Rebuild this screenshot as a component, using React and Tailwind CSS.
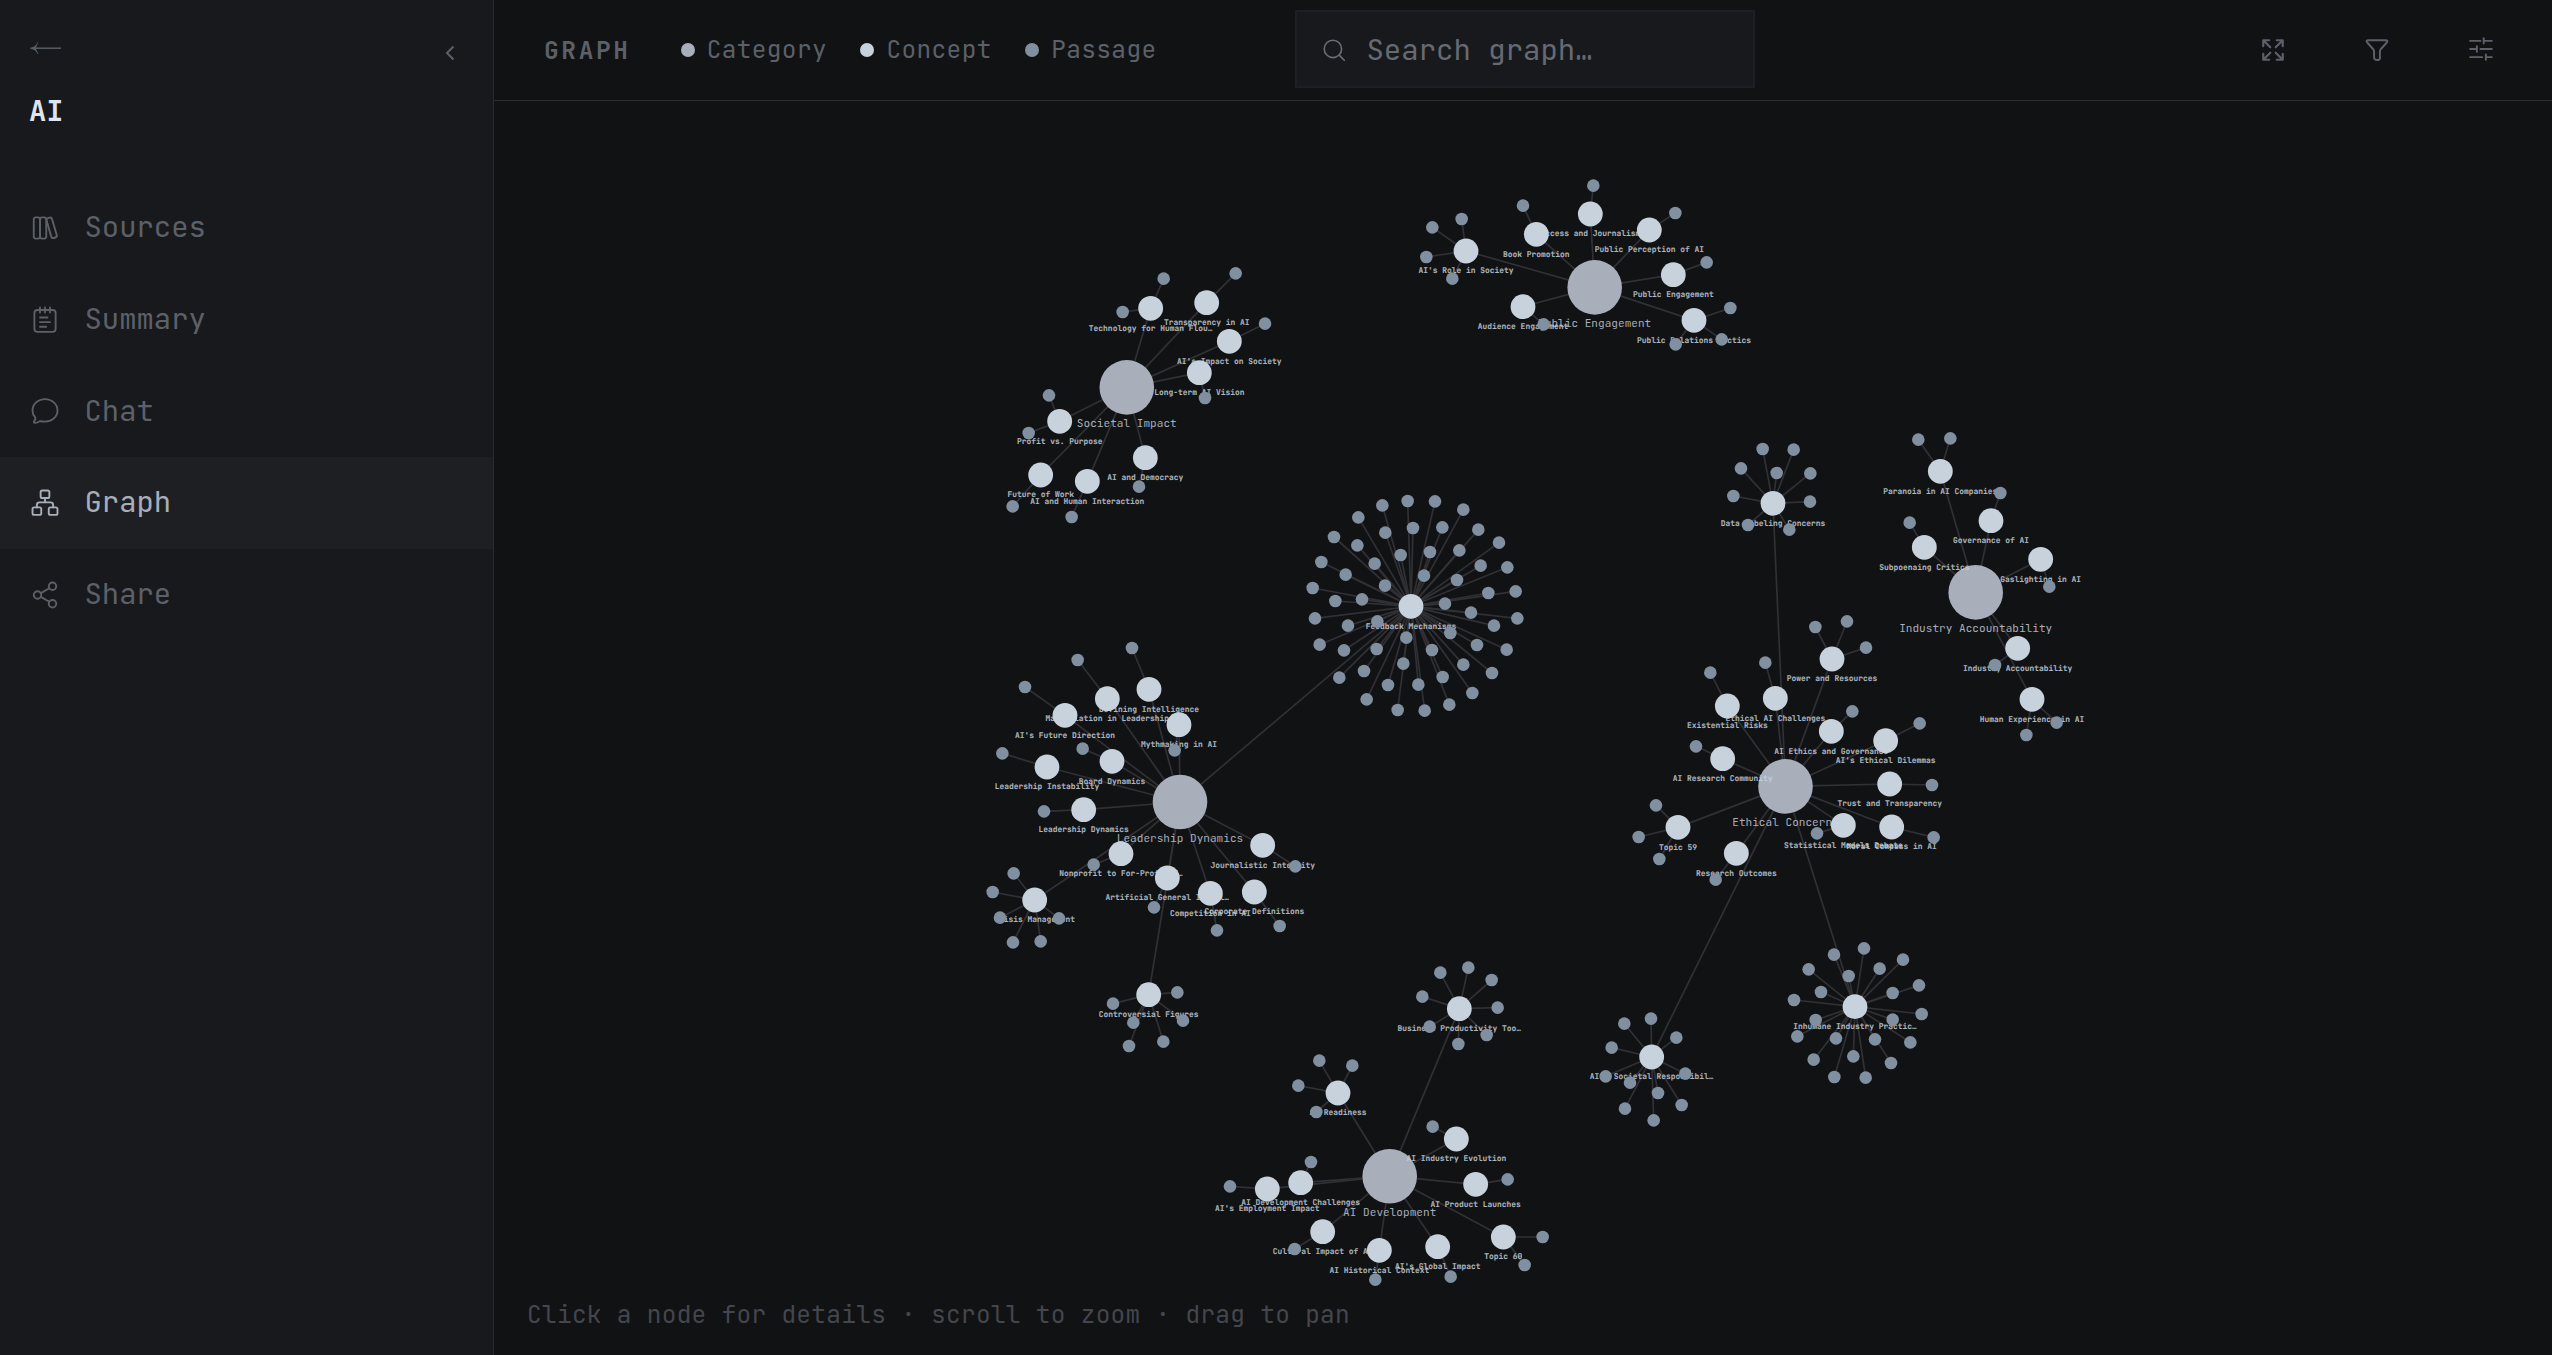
import React, { useState } from 'react';

const NAV_ITEMS = ['Sources', 'Summary', 'Chat', 'Graph', 'Share'];

const LEGEND = [
  { label: 'Category', dot: 'bg-[#a8aeba]' },
  { label: 'Concept', dot: 'bg-[#c8d2dc]' },
  { label: 'Passage', dot: 'bg-[#8090a0]' },
];

const ICON_PATHS = {
  Sources: (
    <>
      <path d="M3 5.2c0-1.1.4-1.7 1.7-1.7H6.3c1.3 0 1.7.6 1.7 1.7v13.6c0 1.1-.4 1.7-1.7 1.7H4.7c-1.3 0-1.7-.6-1.7-1.7z" />
      <path d="M8 5.2c0-1.1.4-1.7 1.7-1.7h1.6c1.3 0 1.7.6 1.7 1.7v13.6c0 1.1-.4 1.7-1.7 1.7H9.7c-1.3 0-1.7-.6-1.7-1.7z" />
      <path d="M13.3 6.1c-.3-1.1 0-1.7 1.1-2l1.2-.4c1.1-.3 1.7.1 2 1.1l3.8 12.8c.3 1.1 0 1.7-1.1 2l-1.3.4c-1.1.3-1.7-.1-2-1.1z" />
    </>
  ),
  Summary: (
    <>
      <rect x="3.5" y="4" width="17" height="17.5" rx="2.5" />
      <path d="M8 2v4M12 2v4M16 2v4M8 10h6M8 13.7h8M8 17.4h5" />
    </>
  ),
  Chat: (
    <path d="M12 20.5c5.5 0 10-4 10-9s-4.5-9-10-9-10 4-10 9c0 2.2.8 4.2 2.3 5.8.2.9-.2 1.9-1 2.7-.5.6-.2 1.5.6 1.5 1.3 0 2.7-.4 3.9-1.4 1.3.3 2.7.4 4.2.4z" />
  ),
  Graph: (
    <>
      <rect x="8.5" y="2" width="7" height="6" rx="1.3" />
      <rect x="2" y="15.5" width="7" height="6" rx="1.3" />
      <rect x="15" y="15.5" width="7" height="6" rx="1.3" />
      <path d="M12 8v3.5M5.5 15.5v-2c0-1.3.6-2 2-2h9c1.4 0 2 .7 2 2v2" />
    </>
  ),
  Share: (
    <>
      <circle cx="18" cy="5" r="3" />
      <circle cx="6" cy="12" r="3" />
      <circle cx="18" cy="19" r="3" />
      <path d="M8.7 10.5l6.7-3.9M8.7 13.5l6.7 3.9" />
    </>
  ),
  Expand: (
    <path d="M3 8.5V3h5.5M3.3 3.3L9.5 9.5M15.5 3H21v5.5M20.7 3.3L14.5 9.5M3 15.5V21h5.5M3.3 20.7l6.2-6.2M15.5 21H21v-5.5M20.7 20.7l-6.2-6.2" />
  ),
  Filter: (
    <path d="M3.8 3h16.4c1.5 0 1.7 1 .9 2-1.6 2-3.7 4-5.6 6.3-.6.7-.8 1.4-.8 2.3v5.7c0 1.2-.9 2-2.5 2s-2.9-1-2.9-2.3v-5.4c0-.9-.2-1.6-.8-2.3C6.6 9 4.5 7 2.9 5c-.8-1-.6-2 .9-2z" />
  ),
  Sliders: (
    <path d="M2 4.5h9.5M14.5 4.5H22M14.5 2v5M2 12h6M11.5 12H22M8.2 9.5v5M2 19.5h11M16.5 19.5H22M16.5 17v5" />
  ),
  Search: (
    <>
      <circle cx="11" cy="11" r="8" />
      <path d="M17 17l4.5 4.5" />
    </>
  ),
};

const Icon = ({ name, className, strokeWidth = 1.5 }) => (
  <svg
    viewBox="0 0 24 24"
    className={className}
    fill="none"
    stroke="currentColor"
    strokeWidth={strokeWidth}
    strokeLinecap="round"
    strokeLinejoin="round"
  >
    {ICON_PATHS[name]}
  </svg>
);

// Graph layout
const CATEGORIES = {
  societal: { label: 'Societal Impact', x: 1126.8, y: 387.4 },
  engagement: { label: 'Public Engagement', x: 1594.7, y: 287.4 },
  leadership: { label: 'Leadership Dynamics', x: 1180, y: 802 },
  ethical: { label: 'Ethical Concerns', x: 1785.5, y: 786.4 },
  industry: { label: 'Industry Accountability', x: 1975.7, y: 592.4 },
  development: { label: 'AI Development', x: 1389.7, y: 1176.2 },
};

// Node positions are relative to the cluster origin, three units to a pixel.
// Each concept is [label, x, y, [passage x, passage y, ...]]
const UNIT = 3;

const CLUSTERS = [
  {
    parent: 'societal',
    origin: [980, 250],
    concepts: [
      ['Technology for Human Flou…', 512, 175, [551, 86, 428, 186]],
      ['Transparency in AI', 680, 158, [767, 70]],
      ["AI's Impact on Society", 748, 274, [855, 221]],
      ['Long-term AI Vision', 658, 368, [675, 444]],
      ['Profit vs. Purpose', 239, 514, [207, 436, 146, 549]],
      ['Future of Work', 182, 675, [98, 769]],
      ['AI and Human Interaction', 322, 694, [275, 801]],
      ['AI and Democracy', 496, 623, [477, 710]],
    ],
  },
  {
    parent: 'engagement',
    origin: [1400, 160],
    concepts: [
      ["AI's Role in Society", 198, 273, [97, 202, 185, 177, 79, 291, 157, 356]],
      ['Access and Journalism', 571, 162, [580, 77]],
      ['Book Promotion', 409, 223, [369, 137]],
      ['Public Perception of AI', 748, 210, [826, 159]],
      ['Public Engagement', 820, 344, [920, 307]],
      ['Public Relations Tactics', 882, 481, [991, 444, 965, 538, 827, 553]],
      ['Audience Engagement', 369, 440, [431, 493]],
    ],
  },
  {
    parent: 'leadership',
    origin: [1290, 480],
    concepts: [
      ['Feedback Mechanisms', 363, 379, [
        353, 63, 435, 64, 277, 76, 520, 89, 205, 112, 369, 144, 457, 142, 565, 149,
        286, 158, 132, 171, 627, 188, 202, 196, 508, 211, 420, 216, 332, 225, 94, 246,
        254, 251, 572, 257, 652, 262, 167, 284, 402, 287, 501, 300, 285, 317, 68, 324,
        677, 334, 595, 339, 216, 358, 136, 363, 465, 371, 543, 398, 75, 415, 682, 415,
        262, 424, 174, 437, 612, 437, 481, 459, 349, 473, 89, 494, 561, 495, 260, 507,
        162, 511, 650, 509, 426, 510, 340, 551, 520, 554, 222, 573, 606, 579, 148, 593,
        458, 591, 294, 615, 385, 614, 547, 639, 230, 658, 478, 674, 323, 690, 404, 692,
      ]],
    ],
  },
  {
    parent: 'leadership',
    origin: [970, 630],
    concepts: [
      ['Defining Intelligence', 537, 178, [486, 54]],
      ['Manipulation in Leadership', 412, 206, [323, 90]],
      ["AI's Future Direction", 285, 256, [165, 171]],
      ['Mythmaking in AI', 627, 284, [614, 361]],
      ['Board Dynamics', 426, 394, [338, 356]],
      ['Leadership Instability', 231, 411, [97, 370]],
      ['Leadership Dynamics', 341, 539, [222, 544]],
      ['Nonprofit to For-Profit T…', 453, 671, [371, 704]],
      ['Artificial General Intell…', 592, 744, [552, 832]],
      ['Competition in AI', 721, 790, [741, 901]],
      ['Corporate Definitions', 853, 786, [929, 888]],
      ['Journalistic Integrity', 878, 646, [976, 709]],
      ['Crisis Management', 194, 810, [131, 730, 68, 786, 90, 863, 267, 865, 129, 937, 212, 934]],
      ['Controversial Figures', 536, 1094, [622, 1087, 429, 1121, 490, 1178, 639, 1172, 477, 1248, 580, 1235]],
    ],
  },
  {
    parent: 'ethical',
    origin: [1610, 610],
    concepts: [
      ['Power and Resources', 666, 147, [616, 51, 711, 34, 768, 113]],
      ['Ethical AI Challenges', 496, 265, [466, 158]],
      ['Existential Risks', 352, 288, [301, 188]],
      ['AI Ethics and Governance', 664, 364, [727, 304]],
      ["AI's Ethical Dilemmas", 827, 392, [929, 340]],
      ['AI Research Community', 338, 446, [258, 409]],
      ['Trust and Transparency', 839, 522, [966, 525]],
      ['Statistical Models Debate', 700, 646, [621, 670]],
      ['Moral Compass in AI', 845, 651, [971, 682]],
      ['Topic 59', 204, 652, [138, 586, 86, 681, 148, 747]],
      ['Research Outcomes', 379, 730, [317, 809]],
    ],
  },
  {
    parent: 'ethical',
    origin: [1700, 420],
    concepts: [
      ['Data Labeling Concerns', 219, 250, [
        188, 87, 281, 89, 123, 145, 230, 159, 331, 160, 100, 228, 330, 245, 144, 315, 268, 329,
      ]],
    ],
  },
  {
    parent: 'ethical',
    origin: [1570, 920],
    concepts: [
      ["AI's Societal Responsibil…", 245, 411, [
        163, 311, 243, 296, 319, 353, 125, 383, 107, 469, 180, 488, 346, 461, 264, 519,
        165, 566, 335, 555, 251, 601,
      ]],
      ['Inhumane Industry Practic…', 855, 260, [
        792, 104, 882, 85, 999, 119, 716, 148, 929, 146, 836, 168, 1047, 196, 753, 216,
        968, 219, 672, 240, 1055, 282, 737, 300, 968, 299, 682, 349, 798, 355, 915, 358,
        1021, 367, 731, 419, 850, 409, 963, 429, 793, 471, 887, 473,
      ]],
    ],
  },
  {
    parent: 'industry',
    origin: [1700, 420],
    concepts: [
      ['Paranoia in AI Companies', 721, 154, [655, 59, 751, 55]],
      ['Governance of AI', 873, 302, [901, 219]],
      ['Subpoenaing Critics', 673, 382, [629, 308]],
      ['Gaslighting in AI', 1022, 418, [1048, 500]],
      ['Industry Accountability', 953, 685, [885, 735]],
      ['Human Experience in AI', 996, 838, [1070, 908, 979, 945]],
    ],
  },
  {
    parent: 'development',
    origin: [1210, 950],
    concepts: [
      ['Business Productivity Too…', 748, 176, [
        691, 68, 775, 53, 845, 90, 637, 140, 863, 173, 659, 230, 830, 255, 745, 282,
      ]],
      ['AI Readiness', 384, 429, [328, 332, 427, 347, 265, 407, 319, 486]],
      ['AI Industry Evolution', 739, 567, [668, 530]],
      ["AI's Employment Impact", 172, 717, [60, 709]],
      ['AI Development Challenges', 272, 698, [303, 636]],
      ['AI Product Launches', 797, 703, [893, 688]],
      ['Cultural Impact of AI', 338, 845, [254, 897]],
      ['AI Historical Context', 508, 901, [496, 989]],
      ["AI's Global Impact", 683, 890, [722, 980]],
      ['Topic 60', 880, 861, [998, 861, 944, 945]],
    ],
  },
];

const buildGraph = () => {
  const concepts = [];
  const passages = [];
  const links = [];

  CLUSTERS.forEach(({ parent, origin, concepts: items }) => {
    items.forEach(([label, x, y, points]) => {
      const concept = { label, x: origin[0] + x / UNIT, y: origin[1] + y / UNIT };
      concepts.push(concept);
      links.push([CATEGORIES[parent], concept]);
      for (let i = 0; i < points.length; i += 2) {
        const passage = { x: origin[0] + points[i] / UNIT, y: origin[1] + points[i + 1] / UNIT };
        passages.push(passage);
        links.push([concept, passage]);
      }
    });
  });

  return { concepts, passages, links };
};

const { concepts, passages, links } = buildGraph();

const GraphCanvas = () => (
  <svg viewBox="494 101 2058 1254" className="block w-full h-full">
    <g stroke="#303035" strokeWidth="1.7">
      {links.map(([a, b], i) => (
        <line key={i} x1={a.x} y1={a.y} x2={b.x} y2={b.y} />
      ))}
    </g>
    <g textAnchor="middle" className="text-[11.1px]">
      {Object.values(CATEGORIES).map((n) => (
        <g key={n.label}>
          <circle cx={n.x} cy={n.y} r="27.3" fill="#a8aeba" />
          <text x={n.x} y={n.y + 39.6} fill="#a8aeba">{n.label}</text>
        </g>
      ))}
    </g>
    <g textAnchor="middle" textRendering="geometricPrecision" className="text-[7.93px] font-bold">
      {concepts.map((n) => (
        <g key={n.label}>
          <circle cx={n.x} cy={n.y} r="12.4" fill="#c8d2dc" />
          <text
            x={n.x}
            y={n.y + 22.4}
            fill="#c8d2dc"
            fillOpacity="0.85"
            stroke="#c8d2dc"
            strokeOpacity="0.5"
            strokeWidth="0.2"
          >
            {n.label}
          </text>
        </g>
      ))}
    </g>
    <g fill="#8090a0">
      {passages.map((n, i) => (
        <circle key={i} cx={n.x} cy={n.y} r="6.3" />
      ))}
    </g>
  </svg>
);

const Sidebar = ({ active, onSelect }) => (
  <aside className="w-[494px] shrink-0 h-full bg-[#18191c] border-r border-[#2a2b30]">
    <div className="flex justify-between h-[182px] pl-[29px] pr-[38px] pt-[38px] text-[#5c6068]">
      <div>
        <svg viewBox="0 0 32 20" className="w-8 h-5" fill="none" stroke="currentColor" strokeWidth="1.4">
          <path d="M3 10.2H32" />
          <path d="M9 4.5C7.5 7.5 5 9.5 1 10.2 5 11 7.5 13 9 16L6.3 10.2z" fill="currentColor" strokeWidth="0.5" />
        </svg>
        <h1 className="mt-[35px] text-[28.8px] leading-[36px] font-bold text-[#dfe5ee]">AI</h1>
      </div>
      <svg viewBox="0 0 10 16" className="w-[10px] h-4 mt-[7px]" fill="none" stroke="currentColor" strokeWidth="2">
        <path d="M8.5 1.5L2 8l6.5 6.5" />
      </svg>
    </div>
    <nav>
      {NAV_ITEMS.map((item) => (
        <button
          key={item}
          type="button"
          onClick={() => onSelect(item)}
          className={`flex items-center w-full h-[91.7px] pl-[30px] gap-[24.5px] text-[28.9px] ${
            active === item ? 'bg-[#1e1f23] text-[#a8aeba]' : 'text-[#5c6068]'
          }`}
        >
          <Icon name={item} className="w-[30px] h-[30px]" />
          <span>{item}</span>
        </button>
      ))}
    </nav>
  </aside>
);

const Toolbar = () => (
  <header className="flex items-center h-[101px] shrink-0 pl-[50px] pr-[58px] border-b border-[#2e2f35] text-[#5c6068]">
    <h2 className="text-[24.4px] font-bold tracking-[2.7px]">GRAPH</h2>
    <div className="flex gap-[33.5px] ml-[50px]">
      {LEGEND.map(({ label, dot }) => (
        <div key={label} className="flex items-center gap-3">
          <span className={`w-[14px] h-[14px] rounded-full ${dot}`} />
          <span className="text-[24.4px] tracking-[0.4px] -mt-0.5">{label}</span>
        </div>
      ))}
    </div>
    <label className="flex items-center w-[460px] h-[78px] ml-[139px] -mt-[3px] pl-[24px] gap-[19px] bg-[#18191c] border-2 border-[#1e1f24] text-[#6a6d75]">
      <Icon name="Search" className="w-[26px] h-[26px] mt-0.5" />
      <input type="text" placeholder="Search graph…" className="w-[340px] mt-[3px] text-[29px] outline-none placeholder:text-[#666a72]" />
    </label>
    <div className="flex items-center gap-[78px] ml-auto">
      <Icon name="Expand" className="w-[26px] h-[26px] -mt-px" strokeWidth={2} />
      <Icon name="Filter" className="w-[26px] h-[26px] -mt-px" strokeWidth={1.8} />
      <Icon name="Sliders" className="w-[26px] h-[26px] -mt-[3px]" strokeWidth={1.8} />
    </div>
  </header>
);

const App = () => {
  const [active, setActive] = useState('Graph');

  return (
    <div className="flex h-screen bg-[#111214] overflow-hidden font-['JetBrains_Mono','DejaVu_Sans_Mono',monospace]">
      <Sidebar active={active} onSelect={setActive} />
      <main className="flex flex-col flex-1 min-w-0">
        <Toolbar />
        <div className="relative flex-1 min-h-0">
          <GraphCanvas />
          <p className="absolute left-[33px] bottom-[23px] text-[24.4px] leading-9 tracking-[0.33px] text-[#44464d]">
            Click a node for details · scroll to zoom · drag to pan
          </p>
        </div>
      </main>
    </div>
  );
};

export default App;
